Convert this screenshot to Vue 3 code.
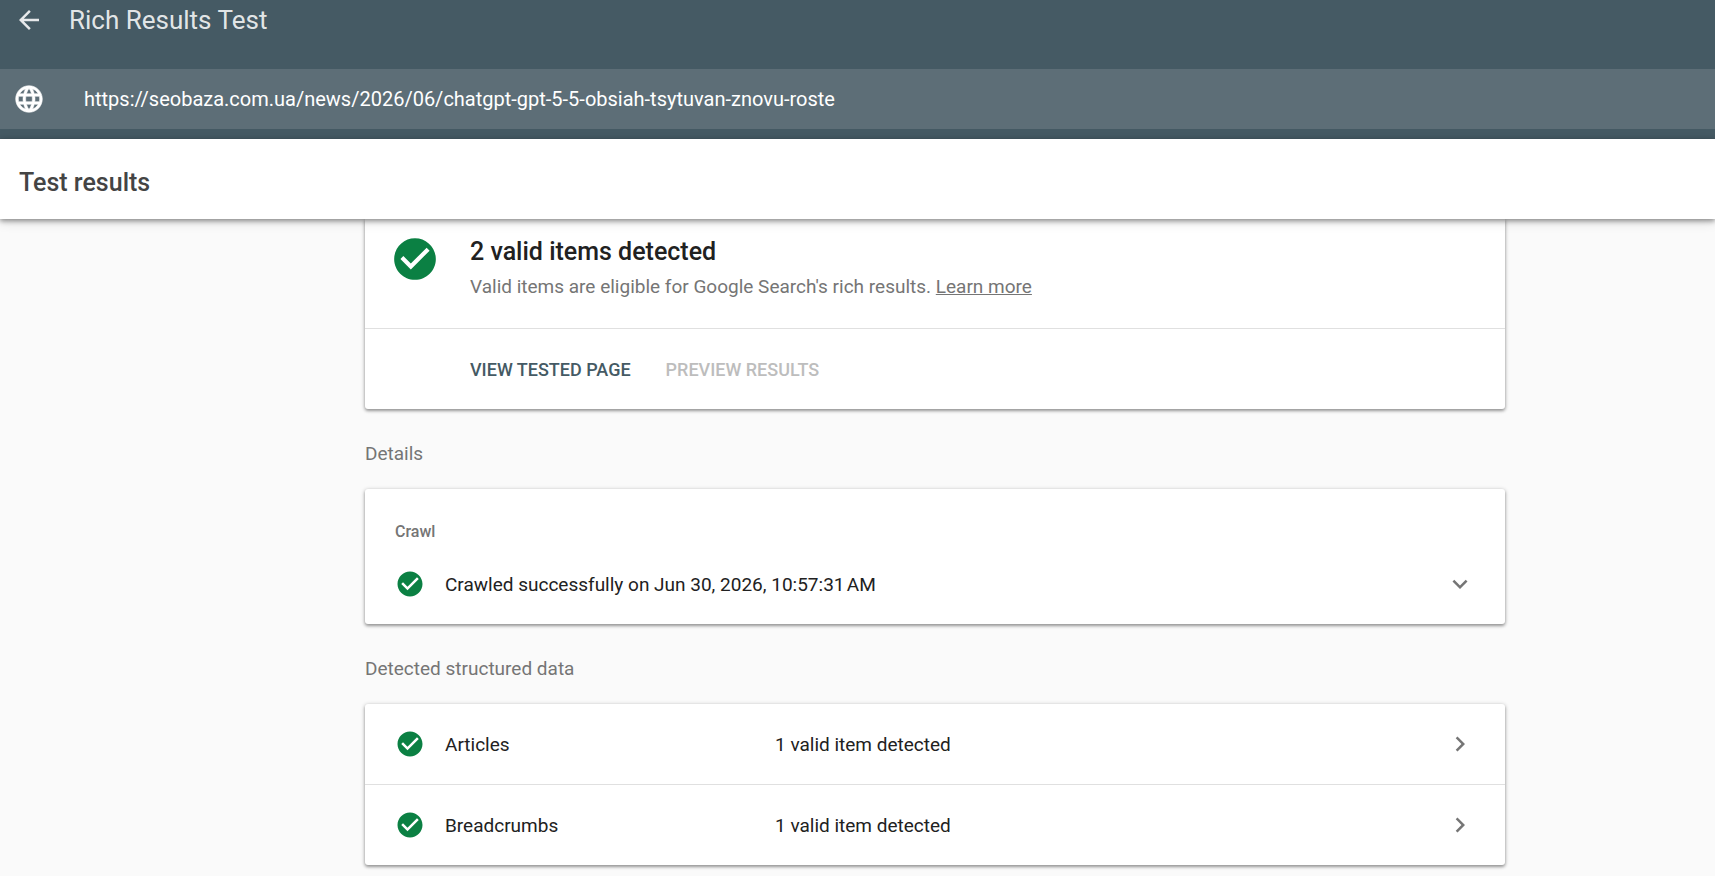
<template>
  <div class="page">
    <header class="app-bar">
      <div class="title-row">
        <button class="icon-btn" type="button" aria-label="Back">
          <svg class="icon" viewBox="0 0 24 24"><path d="M20 11H7.83l5.59-5.59L12 4l-8 8 8 8 1.41-1.41L7.83 13H20z" /></svg>
        </button>
        <h1 class="app-title">Rich Results Test</h1>
      </div>
      <div class="url-bar">
        <svg class="globe" viewBox="0 0 24 24" aria-hidden="true"><path :d="globePath" /></svg>
        <input v-model="url" class="url-input" type="text" aria-label="Tested URL" spellcheck="false" />
      </div>
    </header>

    <div class="results-bar">
      <h2 class="results-title">Test results</h2>
    </div>

    <main class="content">
      <div class="column">
        <section class="card card-top">
          <div class="summary">
            <svg class="check-large" viewBox="0 0 24 24" aria-hidden="true"><path :d="checkPath" /></svg>
            <div>
              <h3 class="summary-title">2 valid items detected</h3>
              <p class="summary-text">Valid items are eligible for Google Search's rich results. <a href="#">Learn more</a></p>
            </div>
          </div>
          <div class="actions">
            <button class="text-btn" type="button">VIEW TESTED PAGE</button>
            <button class="text-btn" type="button" disabled>PREVIEW RESULTS</button>
          </div>
        </section>

        <h4 class="section-label">Details</h4>
        <section class="card crawl">
          <h5 class="crawl-label">Crawl</h5>
          <button class="row crawl-row" type="button" aria-expanded="false">
            <svg class="icon check" viewBox="0 0 24 24"><path :d="checkPath" /></svg>
            <span class="row-wide">Crawled successfully on Jun 30, 2026, 10:57:31&#8239;AM</span>
            <svg class="icon chevron" viewBox="0 0 24 24"><path d="M16.59 8.59L12 13.17 7.41 8.59 6 10l6 6 6-6z" /></svg>
          </button>
        </section>

        <h4 class="section-label">Detected structured data</h4>
        <section class="card">
          <button v-for="item in items" :key="item.name" class="row item-row" type="button">
            <svg class="icon check" viewBox="0 0 24 24"><path :d="checkPath" /></svg>
            <span class="item-name">{{ item.name }}</span>
            <span class="item-status">{{ item.status }}</span>
            <svg class="icon chevron" viewBox="0 0 24 24"><path d="M10 6L8.59 7.41 13.17 12l-4.58 4.59L10 18l6-6z" /></svg>
          </button>
        </section>
      </div>
    </main>
  </div>
</template>

<script setup>
import { ref } from 'vue'

const url = ref('https://seobaza.com.ua/news/2026/06/chatgpt-gpt-5-5-obsiah-tsytuvan-znovu-roste')

const items = [
  { name: 'Articles', status: '1 valid item detected' },
  { name: 'Breadcrumbs', status: '1 valid item detected' },
]

const checkPath = 'M12 2C6.48 2 2 6.48 2 12s4.48 10 10 10 10-4.48 10-10S17.52 2 12 2zm-2 15l-5-5 1.41-1.41L10 14.17l7.59-7.59L19 8l-9 9z'
const globePath = 'M11.99 2C6.47 2 2 6.48 2 12s4.47 10 9.99 10C17.52 22 22 17.52 22 12S17.52 2 11.99 2zm6.93 6h-2.95c-.32-1.25-.78-2.45-1.38-3.56 1.84.63 3.37 1.91 4.33 3.56zM12 4.04c.83 1.2 1.48 2.53 1.91 3.96h-3.82c.43-1.43 1.08-2.76 1.91-3.96zM4.26 14C4.1 13.36 4 12.69 4 12s.1-1.36.26-2h3.38c-.08.66-.14 1.32-.14 2s.06 1.34.14 2H4.26zm.82 2h2.95c.32 1.25.78 2.45 1.38 3.56-1.84-.63-3.37-1.9-4.33-3.56zm2.95-8H5.08c.96-1.66 2.49-2.93 4.33-3.56C8.81 5.55 8.35 6.75 8.03 8zM12 19.96c-.83-1.2-1.48-2.53-1.91-3.96h3.82c-.43 1.43-1.08 2.76-1.91 3.96zM14.34 14H9.66c-.09-.66-.16-1.32-.16-2s.07-1.35.16-2h4.68c.09.65.16 1.32.16 2s-.07 1.34-.16 2zm.25 5.56c.6-1.11 1.06-2.31 1.38-3.56h2.95c-.96 1.65-2.49 2.93-4.33 3.56zM16.36 14c.08-.66.14-1.32.14-2s-.06-1.34-.14-2h3.38c.16.64.26 1.31.26 2s-.1 1.36-.26 2h-3.38z'
</script>

<style>
body {
  margin: 0;
  background: #fafafa;
}
</style>

<style scoped>
.page {
  --bar: #455a64;
  --line: #e0e0e0;
  --text: #212121;
  --muted: #757575;
  --green: #0b8043;
  font-family: Roboto, 'Liberation Sans', sans-serif;
  font-size: 19px;
  line-height: 24px;
  color: var(--text);
}

h1, h2, h3, h4, h5, p { margin: 0; font-weight: 400; }

button {
  font: inherit;
  color: inherit;
  background: none;
  border: none;
  padding: 0;
  cursor: pointer;
}

.icon {
  display: block;
  flex: none;
  width: 30px;
  height: 30px;
  fill: currentColor;
}

.app-bar {
  background: var(--bar);
  padding-bottom: 10px;
  color: #fff;
}

.title-row {
  display: flex;
  align-items: center;
  gap: 25px;
  height: 39px;
  padding: 0 14px 30px;
  color: rgba(255, 255, 255, .87);
}
.app-title { font-size: 26px; line-height: 32px; }

.url-bar {
  display: flex;
  align-items: center;
  gap: 39px;
  height: 60px;
  padding: 0 13px;
  background: #5d6e77;
}
.globe {
  flex: none;
  width: 32px;
  height: 32px;
  fill: #fff;
  stroke: #fff;
  stroke-width: .4;
}
.url-input {
  flex: 1;
  min-width: 0;
  padding: 0;
  border: none;
  outline: none;
  background: none;
  color: #fff;
  font: inherit;
  font-size: 20px;
}

.results-bar {
  position: relative;
  display: flex;
  align-items: center;
  height: 80px;
  padding: 0 19px;
  background: #fff;
  box-shadow: 0 2px 5px rgba(0, 0, 0, .4), 0 2px 12px rgba(0, 0, 0, .14);
}
.results-title {
  font-size: 25px;
  font-weight: 500;
  line-height: 32px;
  color: #444;
  padding-top: 8px;
}

.content { padding: 0 0 11px 155px; }
.column { max-width: 1140px; margin: 0 auto; }

.card {
  background: #fff;
  border-radius: 3px;
  box-shadow: 0 1px 4px rgba(0, 0, 0, .3), 0 2px 3px rgba(0, 0, 0, .24);
}
.card-top { border-radius: 0 0 3px 3px; }

.summary {
  display: flex;
  gap: 30px;
  height: 94px;
  padding: 15px 25px 0;
  border-bottom: 1px solid var(--line);
}
.check-large { flex: none; width: 50px; height: 50px; fill: var(--green); }
.summary-title { font-size: 25px; font-weight: 500; line-height: 36px; }
.summary-text { margin-top: 5px; color: var(--muted); }
.summary-text a { color: inherit; text-decoration: underline; }

.actions {
  display: flex;
  align-items: center;
  gap: 35px;
  height: 78px;
  padding: 2px 105px 0;
}
.text-btn { font-size: 18px; font-weight: 500; color: var(--bar); }
.text-btn:disabled { color: #bdbdbd; cursor: default; }

.section-label { padding: 33px 0 23px; color: var(--muted); }

.crawl { padding: 31px 0 25px; }
.crawl-label {
  padding: 0 30px;
  font-size: 16px;
  font-weight: 500;
  color: var(--muted);
}

.row {
  display: flex;
  align-items: center;
  gap: 20px;
  width: 100%;
  padding: 0 30px;
  text-align: left;
}
.row span { padding-top: 2px; }
.row-wide, .item-status { flex: 1; }
.crawl-row { height: 30px; margin-top: 25px; }
.item-row { height: 80px; }
.item-row + .item-row { height: 81px; border-top: 1px solid var(--line); }
.item-name { width: 310px; }

.check { color: var(--green); }
.chevron { color: var(--muted); }
</style>
